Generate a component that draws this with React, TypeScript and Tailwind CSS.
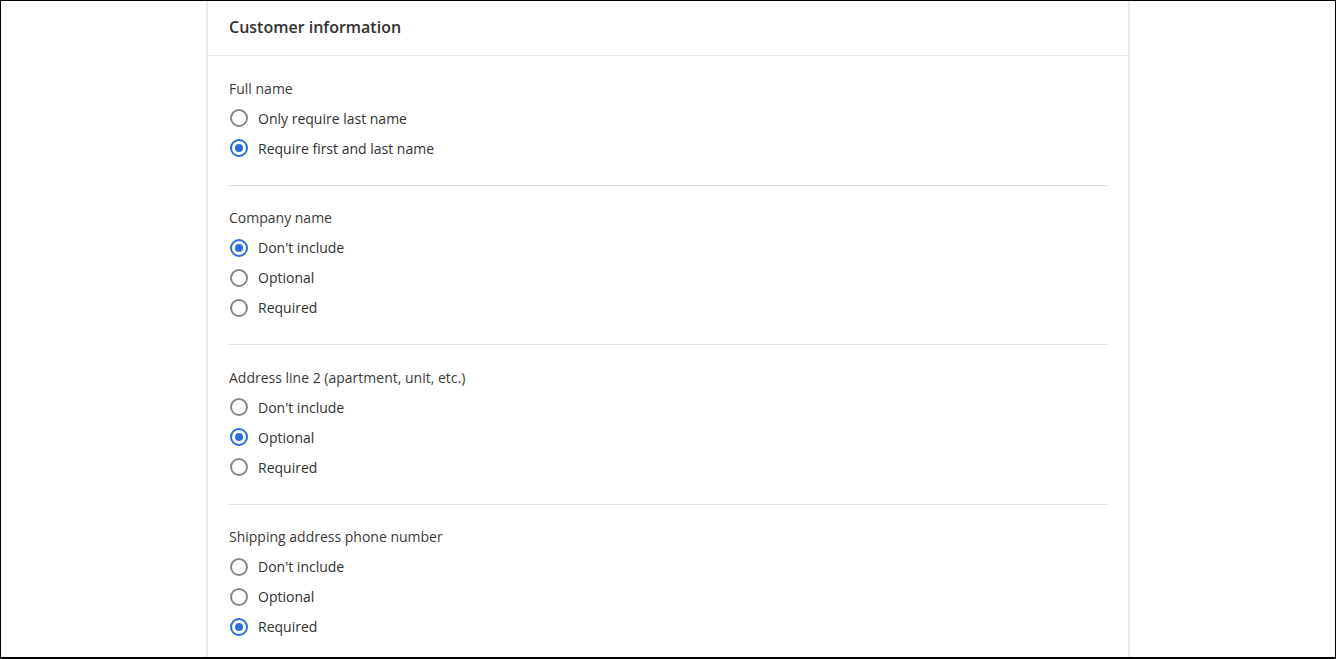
import React, { useState } from 'react';

interface Section {
  id: string;
  label: string;
  options: string[];
  selected: number;
}

const sections: Section[] = [
  { id: 'fullName', label: 'Full name', options: ['Only require last name', 'Require first and last name'], selected: 1 },
  { id: 'company', label: 'Company name', options: ["Don't include", 'Optional', 'Required'], selected: 0 },
  { id: 'address2', label: 'Address line 2 (apartment, unit, etc.)', options: ["Don't include", 'Optional', 'Required'], selected: 1 },
  { id: 'phone', label: 'Shipping address phone number', options: ["Don't include", 'Optional', 'Required'], selected: 2 },
];

const Radio: React.FC<{ checked: boolean; label: string; onSelect: () => void }> = ({ checked, label, onSelect }) => (
  <label className="flex items-center h-[30px] cursor-pointer" onClick={onSelect}>
    <span
      className={`ml-px w-[18px] h-[18px] rounded-full border-2 flex items-center justify-center shrink-0 ${
        checked ? 'border-[#2b6fd6]' : 'border-[#8a8886]'
      }`}
    >
      {checked && <span className="w-[8px] h-[8px] rounded-full bg-[#2b6fd6]" />}
    </span>
    <span className="ml-[10px] text-[14px] text-[#323130]">{label}</span>
  </label>
);

export default function App() {
  const [values, setValues] = useState<Record<string, number>>(
    Object.fromEntries(sections.map(s => [s.id, s.selected]))
  );

  return (
    <div
      className="h-[659px] w-full overflow-hidden bg-white border border-b-2 border-black"
      style={{ fontFamily: '"Open Sans", "Noto Sans", sans-serif' }}
    >
      <div className="ml-[205px] w-[924px] h-full border-x-2 border-[#ececec]">
        {/* Header */}
        <div className="h-[55px] flex items-center px-[21px] pb-[2px] border-b border-[#ebebeb]">
          <h2 className="text-[16px] font-semibold text-[#323130]">Customer information</h2>
        </div>

        {/* Sections */}
        <div className="px-[21px]">
          {sections.map((section, i) => (
            <div
              key={section.id}
              className={`pt-[17px] pb-[21.5px] ${i < sections.length - 1 ? 'border-b border-[#dedede]' : ''}`}
            >
              <div className="h-[30px] flex items-center text-[14px] text-[#3b3a39]">{section.label}</div>
              {section.options.map((opt, idx) => (
                <Radio
                  key={opt}
                  label={opt}
                  checked={values[section.id] === idx}
                  onSelect={() => setValues(prev => ({ ...prev, [section.id]: idx }))}
                />
              ))}
            </div>
          ))}
        </div>
      </div>
    </div>
  );
}
